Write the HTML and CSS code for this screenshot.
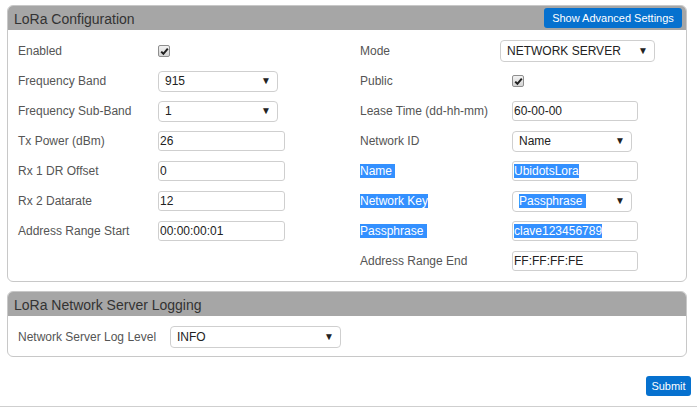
FILE: index.html
```html
<!DOCTYPE html>
<html>
<head>
<meta charset="utf-8">
<link rel="stylesheet" href="styles.css">
</head>
<body>
<div class="page">
  <div class="panel">
    <div class="panel-head">
      <span class="panel-title">LoRa Configuration</span>
      <button class="btn btn-adv">Show Advanced Settings</button>
    </div>
    <div class="panel-body cols">
      <div class="col">
        <div class="row"><span class="label">Enabled</span><span class="check"><svg viewBox="0 0 11 11" width="11" height="11"><path d="M2.2 5.6 L4.4 7.8 L8.8 2.6" fill="none" stroke="#222" stroke-width="2"/></svg></span></div>
        <div class="row"><span class="label">Frequency Band</span><div class="field select w120"><span class="val">915</span><span class="arrow">▼</span></div></div>
        <div class="row"><span class="label">Frequency Sub-Band</span><div class="field select w120"><span class="val">1</span><span class="arrow">▼</span></div></div>
        <div class="row"><span class="label">Tx Power (dBm)</span><div class="field input w127">26</div></div>
        <div class="row"><span class="label">Rx 1 DR Offset</span><div class="field input w127">0</div></div>
        <div class="row"><span class="label">Rx 2 Datarate</span><div class="field input w127">12</div></div>
        <div class="row"><span class="label">Address Range Start</span><div class="field input w127">00:00:00:01</div></div>
      </div>
      <div class="col col-right">
        <div class="row"><span class="label">Mode</span><div class="field select w155 shift"><span class="val">NETWORK SERVER</span><span class="arrow">▼</span></div></div>
        <div class="row"><span class="label">Public</span><span class="check"><svg viewBox="0 0 11 11" width="11" height="11"><path d="M2.2 5.6 L4.4 7.8 L8.8 2.6" fill="none" stroke="#222" stroke-width="2"/></svg></span></div>
        <div class="row"><span class="label">Lease Time (dd-hh-mm)</span><div class="field input w126">60-00-00</div></div>
        <div class="row"><span class="label">Network ID</span><div class="field select w120"><span class="val">Name</span><span class="arrow">▼</span></div></div>
        <div class="row"><span class="label"><span class="sel">Name&nbsp;</span></span><div class="field input w126"><span class="sel">UbidotsLora</span></div></div>
        <div class="row"><span class="label"><span class="sel">Network Key</span></span><div class="field select w120"><span class="val"><span class="sel">Passphrase&nbsp;</span></span><span class="arrow">▼</span></div></div>
        <div class="row"><span class="label"><span class="sel">Passphrase&nbsp;</span></span><div class="field input w126"><span class="sel">clave123456789</span></div></div>
        <div class="row"><span class="label">Address Range End</span><div class="field input w126">FF:FF:FF:FE</div></div>
      </div>
    </div>
  </div>

  <div class="panel panel-log">
    <div class="panel-head">
      <span class="panel-title">LoRa Network Server Logging</span>
    </div>
    <div class="panel-body">
      <div class="row"><span class="label wide">Network Server Log Level</span><div class="field select w171"><span class="val">INFO</span><span class="arrow">▼</span></div></div>
    </div>
  </div>

  <div class="actions">
    <button class="btn btn-submit">Submit</button>
  </div>
</div>
<div class="rule"></div>
</body>
</html>
```
FILE: styles.css
```css
html, body {
  margin: 0;
  padding: 0;
  background: #fff;
}
body {
  font-family: "Liberation Sans", Arial, sans-serif;
  font-size: 12px;
  color: #555;
  width: 697px;
  height: 407px;
  overflow: hidden;
}
.page {
  padding: 5px 10px 0 7px;
}
.panel {
  border: 1px solid #c8c8c8;
  border-radius: 6px;
  overflow: hidden;
}
.panel-log {
  margin-top: 9px;
}
.panel-head {
  background: #a6a6a6;
  height: 24px;
  display: flex;
  align-items: center;
  justify-content: space-between;
  padding: 0 4px 0 6px;
}
.panel-title {
  font-size: 14px;
  color: #333;
  line-height: 16px;
  padding-top: 1px;
}
.btn {
  font-family: "Liberation Sans", Arial, sans-serif;
  background: #0671cf;
  color: #fff;
  border: none;
  border-radius: 3px;
  height: 20px;
  padding: 0;
  margin: 0;
  cursor: pointer;
}
.btn-adv {
  font-size: 11px;
  width: 138px;
}
.panel-body {
  padding: 6px 10px 4px 10px;
}
.cols {
  display: grid;
  grid-template-columns: 342px 1fr;
  padding-bottom: 5px;
}
.row {
  height: 30px;
  display: flex;
  align-items: center;
}
.label {
  width: 140px;
  flex: none;
  line-height: 14px;
}
.col-right .label {
  width: 152px;
}
.label.wide {
  width: 152px;
}
.sel {
  background: #3390ff;
  color: #fff;
}
.check {
  width: 10px;
  height: 10px;
  border: 1px solid #8e8e8e;
  border-radius: 2px;
  background: linear-gradient(#f2f2f2, #d4d4d4);
  display: inline-flex;
  align-items: center;
  justify-content: center;
  overflow: hidden;
}
.check svg {
  display: block;
  flex: none;
}
.field {
  box-sizing: border-box;
  border: 1px solid #cfcfcf;
  border-radius: 3px;
  background: #fff;
  color: #222;
  height: 20px;
  display: flex;
  align-items: center;
  line-height: 14px;
}
.input {
  padding-left: 1px;
}
.select {
  height: 21px;
  border-radius: 4px;
  padding: 0 6px 0 6px;
  justify-content: space-between;
}
.arrow {
  font-size: 10px;
  color: #222;
}
.w120 { width: 120px; }
.w126 { width: 126px; }
.w127 { width: 127px; }
.w155 { width: 155px; height: 22px; }
.w171 { width: 171px; height: 22px; }
.shift { margin-left: -12px; }
.actions {
  display: flex;
  justify-content: flex-end;
  margin-top: 19px;
  margin-right: -4px;
}
.btn-submit {
  font-size: 11px;
  width: 45px;
}
.rule {
  margin-top: 10px;
  border-top: 1px solid #cfcfcf;
}
```
